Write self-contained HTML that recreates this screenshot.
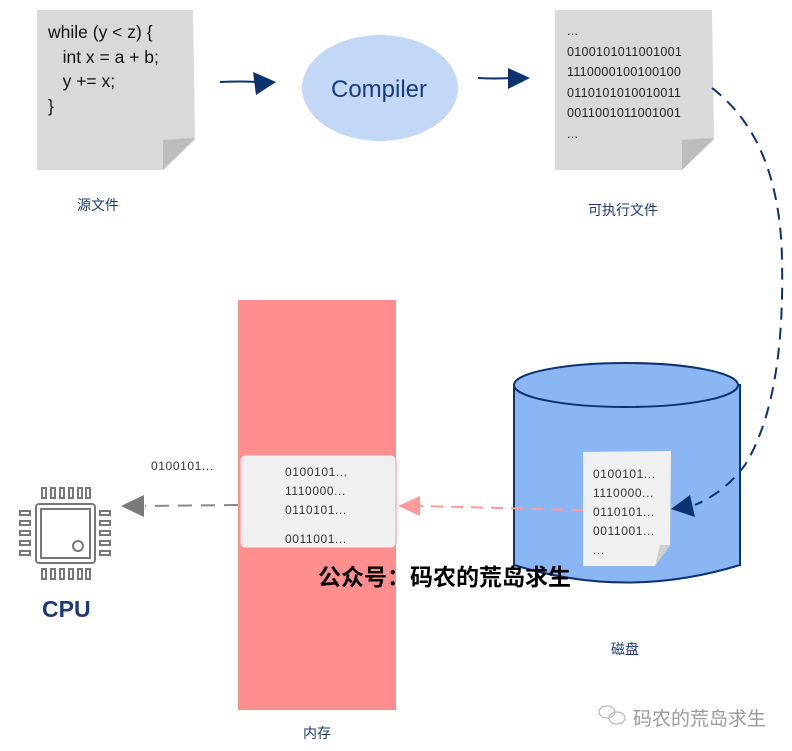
<!DOCTYPE html>
<html><head><meta charset="utf-8"><style>
body{margin:0;width:792px;height:751px;background:#fff;position:relative;overflow:hidden;font-family:"Liberation Sans","Noto Sans CJK SC",sans-serif}
.a{position:absolute}
.cn{color:#1a3a78;font-size:14px}
.code{font-size:17.5px;color:#111;line-height:24.5px}
.bin{font-size:12px;color:#333;line-height:19px;letter-spacing:0.6px}
</style></head><body>
<svg class="a" style="left:0;top:0" width="792" height="751">
<path d="M37 10 L193 10 L195 140 L163 170 L37 170 Z" fill="#d9d9d9"/>
<path d="M163 170 L163 140 L195 138 Z" fill="#bdbdbd"/>
<path d="M555 10 L712 10 L714 140 L682 170 L555 170 Z" fill="#d9d9d9"/>
<path d="M682 170 L682 140 L714 138 Z" fill="#bdbdbd"/>
<path d="M220 82 Q240 81 258 82" stroke="#0c3270" stroke-width="2" fill="none"/>
<path d="M253 72 L276 82 L256 95 Z" fill="#0c3270"/>
<path d="M478 78 Q495 79 512 78" stroke="#0c3270" stroke-width="2" fill="none"/>
<path d="M508 68 L530 78 L508 89 Z" fill="#0c3270"/>
<ellipse cx="380" cy="88" rx="78" ry="53" fill="#c3d8f7"/>
<rect x="238" y="300" width="158" height="410" fill="#ff8f8f"/>
<rect x="240" y="455" width="156" height="93" rx="5" fill="#f0f0f0" stroke="#ff8f8f"/>
<path d="M514 385 L514 565 Q626 600 740 565 L740 385 Z" fill="#8ab6f4" stroke="#0c3270" stroke-width="2"/>
<ellipse cx="626" cy="385" rx="112" ry="22" fill="#8ab6f4" stroke="#0c3270" stroke-width="2"/>
<path d="M583 452 L671 451 L670 545 L655 566 L583 566 Z" fill="#f0f0f0"/>
<path d="M655 566 L660 545 L670 545 Z" fill="#d0d0d0"/>
<path d="M712 88 Q780 140 782 260 Q785 400 745 465 Q725 492 695 505" stroke="#0c3270" stroke-width="2" fill="none" stroke-dasharray="12 8"/>
<path d="M671 509 L690 495 L695 517 Z" fill="#0c3270"/>
<path d="M583 510 L420 506" stroke="#ff9a9a" stroke-width="2" fill="none" stroke-dasharray="12 8"/>
<path d="M398 506 L420 496 L420 516 Z" fill="#ff9a9a"/>
<path d="M238 505 L145 506" stroke="#888" stroke-width="2" fill="none" stroke-dasharray="14 9"/>
<path d="M121 506 L144 495 L144 517 Z" fill="#7a7a7a"/>
<g fill="none" stroke="#777" stroke-width="2">
<rect x="36" y="504" width="59" height="59" rx="3"/>
<rect x="41" y="509" width="49" height="49"/>
<circle cx="78" cy="546" r="5"/>
<rect x="42" y="488" width="4" height="10"/><rect x="51" y="488" width="4" height="10"/><rect x="60" y="488" width="4" height="10"/><rect x="69" y="488" width="4" height="10"/><rect x="78" y="488" width="4" height="10"/><rect x="86" y="488" width="4" height="10"/>
<g transform="translate(0,81)"><rect x="42" y="488" width="4" height="10"/><rect x="51" y="488" width="4" height="10"/><rect x="60" y="488" width="4" height="10"/><rect x="69" y="488" width="4" height="10"/><rect x="78" y="488" width="4" height="10"/><rect x="86" y="488" width="4" height="10"/></g>
<rect x="20" y="511" width="10" height="4"/><rect x="20" y="521" width="10" height="4"/><rect x="20" y="531" width="10" height="4"/><rect x="20" y="541" width="10" height="4"/><rect x="20" y="551" width="10" height="4"/>
<rect x="100" y="511" width="10" height="4"/><rect x="100" y="521" width="10" height="4"/><rect x="100" y="531" width="10" height="4"/><rect x="100" y="541" width="10" height="4"/><rect x="100" y="551" width="10" height="4"/>
</g>
<g fill="none" stroke="#bbb" stroke-width="1.3"><ellipse cx="607" cy="712" rx="8" ry="6"/><ellipse cx="617" cy="718" rx="8" ry="6"/></g>
</svg>
<div class="a code" style="left:48px;top:20px">while (y &lt; z) {<br>&nbsp;&nbsp;&nbsp;int x = a + b;<br>&nbsp;&nbsp;&nbsp;y += x;<br>}</div>
<div class="a cn" style="left:77px;top:195px">源文件</div>
<div class="a" style="left:331px;top:76px;font-size:24px;color:#1a3a78">Compiler</div>
<div class="a" style="left:567px;top:21px;font-size:12.5px;color:#222;line-height:20.5px;letter-spacing:0.3px">...<br>0100101011001001<br>1110000100100100<br>0110101010010011<br>0011001011001001<br>...</div>
<div class="a cn" style="left:588px;top:200px">可执行文件</div>
<div class="a bin" style="left:151px;top:457px">0100101...</div>
<div class="a bin" style="left:285px;top:463px">0100101...<br>1110000...<br>0110101...</div>
<div class="a bin" style="left:285px;top:530px">0011001...</div>
<div class="a bin" style="left:593px;top:465px">0100101...<br>1110000...<br>0110101...<br>0011001...<br>...</div>
<div class="a" style="left:42px;top:596px;font-size:23px;font-weight:bold;color:#1a3a78">CPU</div>
<div class="a" style="left:318px;top:558px;font-size:23px;font-weight:bold;color:#000">公众号：码农的荒岛求生</div>
<div class="a cn" style="left:611px;top:639px">磁盘</div>
<div class="a cn" style="left:303px;top:723px">内存</div>
<div class="a" style="left:633px;top:704px;font-size:19px;color:#999">码农的荒岛求生</div>
</body></html>
